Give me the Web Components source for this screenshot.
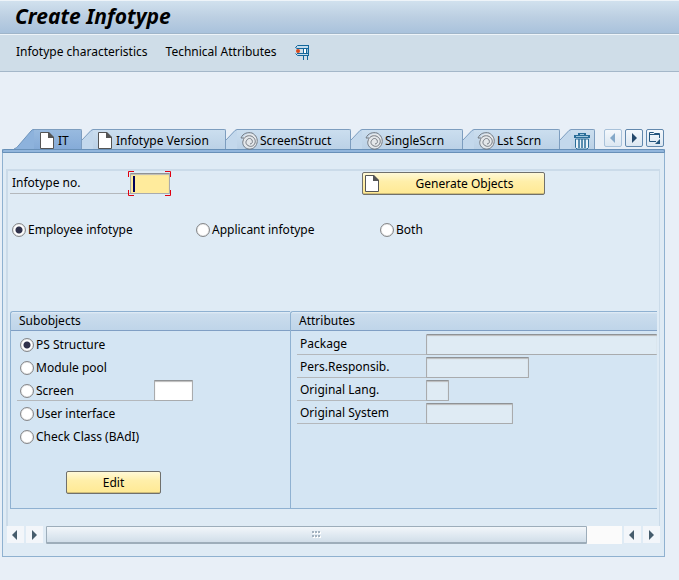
<!DOCTYPE html>
<html lang="en">
<head>
<meta charset="utf-8">
<title>Create Infotype</title>
<style>
  body {
    margin: 0;
    background: #e8eff7;
    color: #000;
    font: 12px/16px "Noto Sans", "DejaVu Sans Condensed", sans-serif;
  }
  .tabs {
    display: flex;
    align-items: flex-start;
    margin: 57px 14px 0;
  }
  .tabs nav {
    display: flex;
    gap: 3px;
    margin-left: 9px;
  }
  .row {
    display: flex;
  }
  .number {
    margin-left: 2px;
    padding-top: 1px;
  }
  .number sap-field {
    width: 352px;
  }
  .kinds {
    margin: 23px 0 70px 4px;
  }
  .kinds sap-radio {
    width: 184px;
  }
  .groups {
    margin: 0 2px 17px;
  }
  .subobjects {
    flex: 0 0 280px;
  }
  .attributes {
    flex: 1;
    min-width: 0;
  }
  .subobjects sap-radio {
    margin-left: 9px;
  }
  .subobjects sap-field {
    margin-left: 6px;
  }
  .subobjects sap-field sap-radio {
    margin-left: 0;
  }
  .attributes sap-field {
    margin-left: 6px;
  }
  .edit {
    width: 95px;
    margin: 23px 0 14px 55px;
  }
</style>
</head>
<body>
<sap-title>Create Infotype</sap-title>
<sap-toolbar>
  <sap-tool>Infotype characteristics</sap-tool>
  <sap-tool>Technical Attributes</sap-tool>
  <sap-tool name="Services"><sap-icon name="clamp"></sap-icon></sap-tool>
</sap-toolbar>

<div class="tabs">
  <sap-tab active icon="page" style="--width: 48px">IT</sap-tab>
  <sap-tab icon="page" style="--width: 133px">Infotype Version</sap-tab>
  <sap-tab icon="spiral" style="--width: 114px">ScreenStruct</sap-tab>
  <sap-tab icon="spiral" style="--width: 101px">SingleScrn</sap-tab>
  <sap-tab icon="spiral" style="--width: 86px">Lst Scrn</sap-tab>
  <sap-tab icon="trash" name="Delete" style="--width: 24px"></sap-tab>
  <nav>
    <sap-nav name="Previous tab" icon="left" disabled></sap-nav>
    <sap-nav name="Next tab" icon="right"></sap-nav>
    <sap-nav name="Tab list" icon="list"></sap-nav>
  </nav>
</div>

<sap-panel>
  <div class="row number">
    <sap-field required size="40" style="--label: 120px; --indent: 2px">Infotype no.</sap-field>
    <sap-button icon="page" style="width: 183px">Generate Objects</sap-button>
  </div>
  <div class="row kinds">
    <sap-radio name="kind" checked>Employee infotype</sap-radio>
    <sap-radio name="kind">Applicant infotype</sap-radio>
    <sap-radio name="kind">Both</sap-radio>
  </div>
  <div class="row groups">
    <sap-group class="subobjects" heading="Subobjects">
      <sap-radio name="part" checked>PS Structure</sap-radio>
      <sap-radio name="part">Module pool</sap-radio>
      <sap-field size="39" name="Screen number" style="--label: 137px; --indent: 3px">
        <sap-radio name="part">Screen</sap-radio>
      </sap-field>
      <sap-radio name="part">User interface</sap-radio>
      <sap-radio name="part">Check Class (BAdI)</sap-radio>
      <sap-button class="edit">Edit</sap-button>
    </sap-group>
    <sap-group class="attributes" heading="Attributes" style="--label: 129px; --indent: 3px">
      <sap-field readonly>Package</sap-field>
      <sap-field readonly size="103">Pers.Responsib.</sap-field>
      <sap-field readonly size="23">Original Lang.</sap-field>
      <sap-field readonly size="87">Original System</sap-field>
    </sap-group>
  </div>
  <sap-scrollbar slot="scroll"></sap-scrollbar>
</sap-panel>

<script>
const ICONS = {
  page: `<svg width="14" height="17" viewBox="0 0 14 17">
    <path d="M.5.5h8l5 5v11H.5z" fill="#fff" stroke="#555"/>
    <path d="M8 0h1l5 5v1H8z" fill="#555"/></svg>`,
  spiral: `<svg width="18" height="18" viewBox="0 0 18 18" fill="none">
    <circle cx="10" cy="9" r="7.5" fill="#e4e7ea"/>
    <path d="M1 6C3 1 8 0 12 1c4 2 6 6 5 10-1 4-5 7-9 6-4-1-6-5-5-8 1-4 4-6 8-5 3 1 5 4 4 7-1 3-4 4-6 3-3-1-4-4-2-6 1-2 4-2 5 0 1 2 0 4-2 4M1 6h3" stroke="#747a82"/></svg>`,
  trash: `<svg width="18" height="18" viewBox="0 0 18 18">
    <path d="M5 1h8v2h4v3H1V3h4z" fill="#2a6d98"/>
    <path d="M7 2h4v1H7zM3 4h12v1H3z" fill="#9fc6de"/>
    <path d="M2.5 7h13v8.5L14 17H4l-1.500-1.500z" fill="#eaf3f9" stroke="#2a6d98"/>
    <path d="M6 7v9M9 7v9M12 7v9" stroke="#2a6d98" stroke-width="1.5"/></svg>`,
  clamp: `<svg width="14" height="15" viewBox="0 0 14 15">
    <path d="M2 1h12v3H2zM2 8h12v3H2z" fill="#c4dced"/>
    <path d="M8 4h6v4H8z" fill="#8fbcd9"/>
    <path d="M9 4h2v4H9z" fill="#fff"/>
    <path d="M14 .5H2.500L.5 2.500 2 3.500h11M2 8.500h11M.5 8.500l2 2H14M13.500.5v10M8.500 4v4M11.500 4v4M8.500 11v4M12.500 11v4" fill="none" stroke="#12669b"/>
    <circle cx="3" cy="6" r="2" fill="#d84a1b"/></svg>`,
  left: `<svg width="16" height="16" viewBox="0 0 16 16"><path d="M10 3v10L5 8z" fill="currentColor"/></svg>`,
  right: `<svg width="16" height="16" viewBox="0 0 16 16"><path d="M6 3v10l5-5z" fill="currentColor"/></svg>`,
  list: `<svg width="16" height="16" viewBox="0 0 16 16" fill="none" stroke="#24557d">
    <path d="M9 11.500H2.500v-9h4l1 1h5V8"/><path d="M3 4.500h9"/>
    <path d="M13 9v5H8z" fill="#24557d" stroke="none"/></svg>`,
};

class SapElement extends HTMLElement {
  connectedCallback() {
    if (this.shadowRoot) return;
    this.attachShadow({ mode: "open" });
    this.shadowRoot.innerHTML = `
      <style>
        *, :host { box-sizing: border-box; }
        button, input { font: inherit; color: inherit; margin: 0; }
        svg { display: block; flex: none; }
      </style>${this.template()}`;
    this.ready();
  }
  ready() {}
}

class SapIcon extends SapElement {
  template() {
    return `<style>:host { display: block; }</style>${ICONS[this.getAttribute("name")]}`;
  }
}

class SapTitle extends SapElement {
  template() {
    return `
      <style>
        :host {
          display: block;
          height: 34px;
          padding: 3px 15px;
          border-top: 1px solid #eef4f9;
          border-bottom: 1px solid #a0b5c9;
          background: linear-gradient(#d1e1ee, #bccfe2 50%, #a9c2dc);
        }
        h1 { margin: 0; font: italic bold 21px/24px "Noto Sans", "DejaVu Sans Condensed", sans-serif; }
      </style>
      <h1><slot></slot></h1>`;
  }
}

class SapToolbar extends SapElement {
  template() {
    return `
      <style>
        :host {
          display: flex;
          align-items: center;
          gap: 18px;
          height: 38px;
          padding: 0 16px 2px;
          border-top: 1px solid #eef4f9;
          border-bottom: 1px solid #a4b7c9;
          background: #cfdde8;
        }
      </style>
      <slot></slot>`;
  }
}

class SapTool extends SapElement {
  template() {
    const name = this.getAttribute("name");
    return `
      <style>
        :host { display: block; }
        button { display: block; padding: 0; border: 0; background: none; }
      </style>
      <button type="button" ${name ? `aria-label="${name}"` : ""}><slot></slot></button>`;
  }
}

class SapTab extends SapElement {
  template() {
    const active = this.hasAttribute("active");
    const name = this.getAttribute("name");
    const fill = active ? "#8db2dc" : "#c3d8ec";
    const slope = active
      ? `<svg width="20" height="20"><path d="M0 20Q3 19 5 16L17 2q1-2 3-2v20z" fill="${fill}"/><path d="M0 20Q3 19 5 16L17 2q1-1.500 3-1.500" fill="none" stroke="#6f95bd"/></svg>`
      : `<svg width="11" height="20"><path d="M0 11L9 1l2-1v20H0z" fill="${fill}"/><path d="M0 11L9 1.500 11 .5" fill="none" stroke="#7d9dbf"/></svg>`;
    return `
      <style>
        :host { display: flex; }
        button {
          display: flex;
          align-items: center;
          gap: 4px;
          width: var(--width);
          height: 20px;
          padding: 2px 0 0 ${active ? 6 : 5}px;
          border: 0 solid #7d9dbf;
          border-width: 1px 1px 0 0;
          border-top-right-radius: 2px;
          background: ${active ? "linear-gradient(#98badf, #85abd8)" : "linear-gradient(#cbdeef, #bbd1e6)"};
          white-space: nowrap;
        }
        .spiral { gap: 2px; padding-left: 3px; }
        .trash { padding-left: 2px; }
      </style>
      ${slope}
      <button type="button" class="${this.getAttribute("icon")}" ${name ? `aria-label="${name}"` : ""}>
        ${ICONS[this.getAttribute("icon")]}<slot></slot>
      </button>`;
  }
}

class SapNav extends SapElement {
  template() {
    const disabled = this.hasAttribute("disabled");
    return `
      <style>
        :host { display: block; }
        button {
          display: block;
          width: 18px;
          height: 18px;
          padding: 0;
          border: 1px solid #6288ad;
          border-radius: 2px;
          background: linear-gradient(#f4f8fc, #dce7f1);
          color: #24486b;
        }
        button:disabled { border-color: #a9c2da; color: #85a9c9; }
      </style>
      <button type="button" aria-label="${this.getAttribute("name")}" ${disabled ? "disabled" : ""}>
        ${ICONS[this.getAttribute("icon")]}
      </button>`;
  }
}

class SapPanel extends SapElement {
  template() {
    return `
      <style>
        :host {
          display: block;
          margin: 0 14px 0 2px;
          padding: 0 4px 12px;
          border: 1px solid #8fb1d0;
          border-top: 0;
          background: #dfebf5;
        }
        .band {
          height: 4px;
          margin: 0 -5px 16px;
          border: 1px solid #6890b8;
          border-radius: 2px 2px 0 0;
          background: #92b6dc;
        }
        .view {
          display: flow-root;
          border: 2px solid #cbdbe9;
          border-width: 2px 1px 0 2px;
          margin-left: -1px;
        }
      </style>
      <div class="band"></div>
      <div class="view"><slot></slot></div>
      <slot name="scroll"></slot>`;
  }
}

class SapField extends SapElement {
  template() {
    const size = this.getAttribute("size");
    const name = this.getAttribute("name");
    const required = this.hasAttribute("required");
    const readonly = this.hasAttribute("readonly");
    const label = name ? `<div class="label"><slot></slot></div>` : `<label class="label" for="box"><slot></slot></label>`;
    const corners = `
      <svg width="43" height="25" fill="none" stroke="#e00010">
        <path d="M.5 6V.5H6M37 .5h5.500V6M.5 19v5.500H6M37 24.500h5.500V19"/></svg>`;
    return `
      <style>
        :host { display: flex; align-items: flex-start; height: 23px; }
        .label {
          flex: none;
          width: var(--label);
          height: 22px;
          padding: 3px 0 0 var(--indent);
          border-bottom: 1px solid #b4b8bc;
        }
        div.label { padding-top: 0; }
        .box {
          display: flex;
          position: relative;
          margin-top: 1px;
          ${size ? `width: ${size}px;` : "flex: 1; min-width: 0;"}
        }
        input {
          width: 100%;
          height: 21px;
          padding: 0 4px;
          border: 1px solid #a9abad;
          border-top-color: #8f9295;
          border-radius: 1px;
          outline: 0;
          background: ${readonly ? "#dfebf4" : "#fff"};
          box-shadow: inset 0 1px 1px #bbb;
          ${size ? "" : "border-right: 0;"}
        }
        .required input {
          background: linear-gradient(#00005a, #00005a) 2px 2px / 2px 16px no-repeat #ffeb9c;
        }
        svg { position: absolute; left: -2px; top: -2px; }
      </style>
      ${label}
      <div class="box ${required ? "required" : ""}">
        <input id="box" type="text" ${readonly ? "readonly" : ""} ${name ? `aria-label="${name}"` : ""}>
        ${required ? corners : ""}
      </div>`;
  }
}

class SapButton extends SapElement {
  template() {
    const icon = this.getAttribute("icon");
    return `
      <style>
        :host { display: block; }
        button {
          display: flex;
          align-items: center;
          width: 100%;
          height: 23px;
          padding: 0 2px;
          border: 1px solid #70706c;
          border-radius: 2px;
          background: linear-gradient(#fff9d8, #ffefaa 40%, #ffe993);
          box-shadow: inset 0 -1px #cfbd79;
        }
        span { flex: 1; text-align: center; }
        .icon span { padding-left: 8px; }
      </style>
      <button type="button" class="${icon ? "icon" : ""}">${icon ? ICONS[icon] : ""}<span><slot></slot></span></button>`;
  }
}

class SapRadio extends SapElement {
  template() {
    return `
      <style>
        :host { display: block; }
        label { display: flex; align-items: center; gap: 2px; height: 23px; }
        input {
          appearance: none;
          flex: none;
          width: 14px;
          height: 14px;
          border: 1px solid #85878a;
          border-radius: 50%;
          background: #fff;
          box-shadow: inset 0 0 1px #999;
        }
        input:checked { background: radial-gradient(circle, #30324c 0 3px, #fff 4px); }
      </style>
      <label><input type="radio" ${this.hasAttribute("checked") ? "checked" : ""}><slot></slot></label>`;
  }
  ready() {
    this.input = this.shadowRoot.querySelector("input");
    // each input has its own root, so the group is kept in step here
    this.input.addEventListener("change", () => {
      document
        .querySelectorAll(`sap-radio[name="${this.getAttribute("name")}"]`)
        .forEach((radio) => {
          radio.input.checked = radio === this;
        });
    });
  }
}

class SapGroup extends SapElement {
  template() {
    return `
      <style>
        :host {
          display: block;
          border: 1px solid #8fb1d1;
          border-right: 0;
          border-radius: 3px 0 0 0;
          background: #d4e5f3;
        }
        h2 {
          height: 19px;
          margin: 0 0 2px;
          padding: 1px 8px 0;
          border-bottom: 1px solid #809fc4;
          border-radius: 3px 0 0 0;
          background: linear-gradient(#e4eef7, #cbdded 2px, #bfd5e9);
          font: inherit;
        }
      </style>
      <h2>${this.getAttribute("heading")}</h2>
      <slot></slot>`;
  }
}

class SapScrollbar extends SapElement {
  template() {
    return `
      <style>
        :host { display: flex; gap: 2px; height: 18px; }
        button {
          width: 17px;
          height: 17px;
          padding: 0;
          border: 0;
          background: #f3f6fa;
          color: #465c6c;
        }
        .track { flex: 1; margin-left: 1px; background: #fbfbfb; }
        .thumb {
          display: flex;
          align-items: center;
          justify-content: center;
          width: 94%;
          height: 18px;
          border: 1px solid #9dadba;
          border-bottom-width: 2px;
          border-radius: 1px;
          background: linear-gradient(#f2f6fa, #e1eaf2 50%, #d1dee9);
        }
      </style>
      <button type="button" aria-label="Scroll to start">${ICONS.left}</button>
      <button type="button" aria-label="Scroll left">${ICONS.right}</button>
      <div class="track"><div class="thumb">
        <svg width="9" height="7" fill="#fff">
          <path d="M1 1h2v2H1zM4 1h2v2H4zM7 1h2v2H7zM1 5h2v2H1zM4 5h2v2H4zM7 5h2v2H7z"/>
          <path d="M0 0h2v2H0zM3 0h2v2H3zM6 0h2v2H6zM0 4h2v2H0zM3 4h2v2H3zM6 4h2v2H6z" fill="#a3b2bf"/>
        </svg>
      </div></div>
      <button type="button" aria-label="Scroll right">${ICONS.left}</button>
      <button type="button" aria-label="Scroll to end">${ICONS.right}</button>`;
  }
}

customElements.define("sap-icon", SapIcon);
customElements.define("sap-title", SapTitle);
customElements.define("sap-toolbar", SapToolbar);
customElements.define("sap-tool", SapTool);
customElements.define("sap-tab", SapTab);
customElements.define("sap-nav", SapNav);
customElements.define("sap-panel", SapPanel);
customElements.define("sap-field", SapField);
customElements.define("sap-button", SapButton);
customElements.define("sap-radio", SapRadio);
customElements.define("sap-group", SapGroup);
customElements.define("sap-scrollbar", SapScrollbar);
</script>
</body>
</html>
